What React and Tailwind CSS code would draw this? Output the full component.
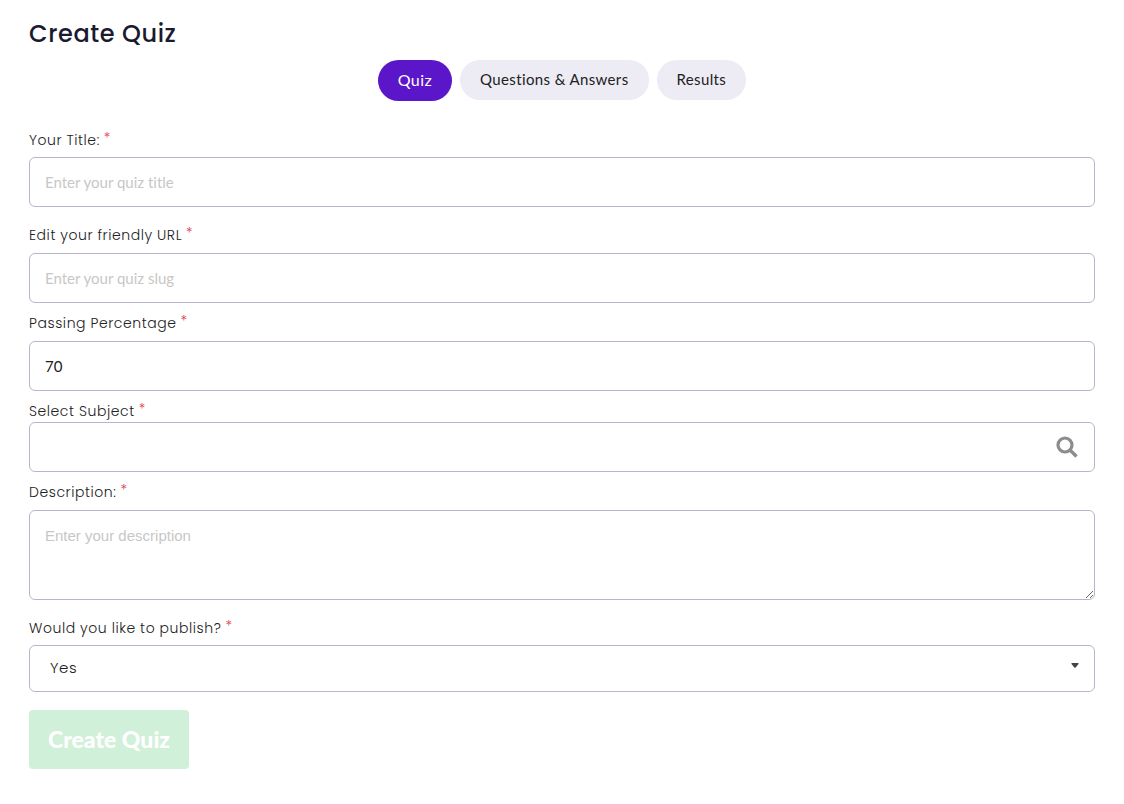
import React, { useState } from 'react'

const tabs = ['Quiz', 'Questions & Answers', 'Results']

const inputClass =
  "block w-full h-[50px] px-[15px] rounded-md border border-[#b8b5cb] bg-white font-['Lato',sans-serif] text-[15px] text-[#212121] placeholder:text-[#c7c7c7] [font-variant-ligatures:none] outline-none focus:border-[#5c16c9]"

const Field = ({ id, label, className = '', children }) => (
  <div className={className}>
    <label htmlFor={id} className="flex items-start gap-1 text-sm leading-5 font-light tracking-[0.04em] text-[#212121]">
      <span>{label}</span>
      <span className="leading-4 text-[#e0334c]">*</span>
    </label>
    {children}
  </div>
)

const App = () => {
  const [activeTab, setActiveTab] = useState('Quiz')
  const [form, setForm] = useState({
    title: '',
    slug: '',
    passing: '70',
    subject: '',
    description: '',
    publish: 'Yes'
  })

  const handleChange = (e) => {
    setForm({ ...form, [e.target.name]: e.target.value })
  }

  return (
    <main className="min-h-screen bg-white px-[29px] pt-4 pb-8 font-['Poppins','Inter',sans-serif]">
      <h1 className="text-2xl leading-9 font-medium tracking-wide text-[#1b1b2f]">Create Quiz</h1>

      <nav className="mt-2 flex items-start justify-center gap-2 font-['Lato',sans-serif]">
        {tabs.map((tab) => (
          <button
            key={tab}
            type="button"
            onClick={() => setActiveTab(tab)}
            className={`rounded-full px-5 pb-[2px] tracking-wide ${
              activeTab === tab
                ? 'h-[41px] bg-[#5c16c9] text-base text-white'
                : 'h-10 bg-[#edebf4] text-[15px] text-[#212121]'
            }`}
          >
            {tab}
          </button>
        ))}
      </nav>

      <form className="mt-[29px]" onSubmit={(e) => e.preventDefault()}>
        <Field id="title" label="Your Title:" className="mb-[18px]">
          <input id="title" name="title" type="text" placeholder="Enter your quiz title" value={form.title} onChange={handleChange} className={`${inputClass} mt-[7px]`} />
        </Field>

        <Field id="slug" label="Edit your friendly URL" className="mb-[10px]">
          <input id="slug" name="slug" type="text" placeholder="Enter your quiz slug" value={form.slug} onChange={handleChange} className={`${inputClass} mt-2`} />
        </Field>

        <Field id="passing" label="Passing Percentage" className="mb-[10px]">
          <input id="passing" name="passing" type="text" inputMode="numeric" value={form.passing} onChange={handleChange} className={`${inputClass} mt-2`} />
        </Field>

        <Field id="subject" label="Select Subject" className="mb-[10px]">
          <div className="relative mt-px">
            <input id="subject" name="subject" type="text" value={form.subject} onChange={handleChange} className={inputClass} />
            <svg className="pointer-events-none absolute top-[14px] right-[15px] size-6" viewBox="0 0 24 24" fill="none" stroke="#8c8c8c" aria-hidden="true">
              <circle cx="9" cy="9" r="7" strokeWidth="3.2" />
              <path d="M14 14L20.5 20.5" strokeWidth="3.4" />
            </svg>
          </div>
        </Field>

        <Field id="description" label="Description:" className="mb-[18px]">
          <textarea
            id="description"
            name="description"
            placeholder="Enter your description"
            value={form.description}
            onChange={handleChange}
            className="mt-2 block h-[90px] w-full resize rounded-md border border-[#b8b5cb] bg-white px-[15px] py-[14px] font-['Liberation_Sans',sans-serif] text-[15px] text-[#212121] placeholder:text-[#c7c7c7] outline-none focus:border-[#5c16c9]"
          />
        </Field>

        <Field id="publish" label="Would you like to publish?" className="mb-[18px]">
          <div className="relative mt-[7px]">
            <select
              id="publish"
              name="publish"
              value={form.publish}
              onChange={handleChange}
              className="block h-[47px] w-full appearance-none rounded-md border border-[#b8b5cb] bg-white px-5 text-[15px] font-light tracking-[0.04em] text-[#212121] outline-none focus:border-[#5c16c9]"
            >
              <option>Yes</option>
              <option>No</option>
            </select>
            <svg className="pointer-events-none absolute top-[18px] right-4 h-[5px] w-2" viewBox="0 0 8 5" fill="#444" aria-hidden="true">
              <path d="M1 0H7Q8 0 7.5 1L4.7 4.5Q4 5 3.3 4.5L.5 1Q0 0 1 0Z" />
            </svg>
          </div>
        </Field>

        <button type="submit" className="h-[59px] rounded bg-[#d1f0d9] px-[19px] font-['Lato',sans-serif] text-[23px] font-black text-white">
          Create Quiz
        </button>
      </form>
    </main>
  )
}

export default App
